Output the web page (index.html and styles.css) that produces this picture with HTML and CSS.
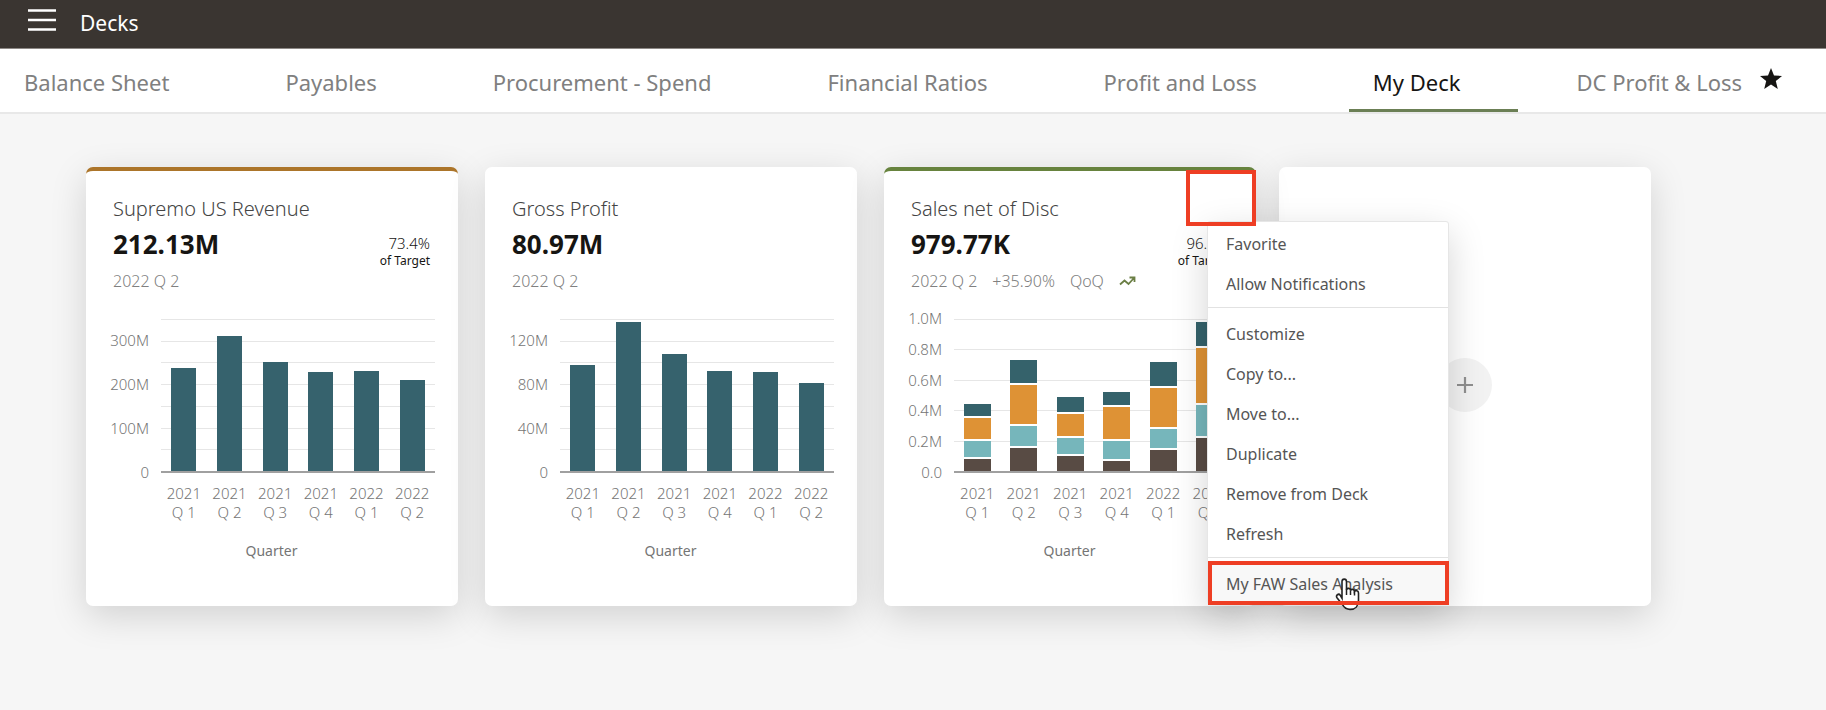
FILE: index.html
```
<!DOCTYPE html>
<html lang="en">
<head>
<meta charset="utf-8">
<title>Decks</title>
<link rel="stylesheet" href="styles.css">
</head>
<body>
<header class="topbar">
  <button class="menu-button" aria-label="Open navigation">
    <svg width="28" height="22" viewBox="0 0 28 22"><path d="M0 1.500h28M0 11h28M0 20.500h28" stroke="#fff" stroke-width="2.500"/></svg>
  </button>
  <h1 class="title">Decks</h1>
</header>

<nav class="tabs">
  <a class="tab" href="#">Balance Sheet</a>
  <a class="tab" href="#">Payables</a>
  <a class="tab" href="#">Procurement - Spend</a>
  <a class="tab" href="#">Financial Ratios</a>
  <a class="tab" href="#">Profit and Loss</a>
  <a class="tab tab-active" href="#" aria-current="page">My Deck</a>
  <a class="tab tab-starred" href="#">DC Profit &amp; Loss
    <svg class="star" width="22" height="21" viewBox="0 0 22 21"><path d="M11 0l3 7.400 8 .6-6.200 5.100 2 7.900L11 16.600 4.200 21l2-7.900L0 8l8-.6z" fill="#161513"/></svg>
  </a>
</nav>

<main class="deck">
  <section class="card kpi warn">
    <h2 class="card-title">Supremo US Revenue</h2>
    <div class="summary">
      <strong class="value">212.13M</strong>
      <p class="target"><span class="percent">73.4%</span><span>of Target</span></p>
    </div>
    <p class="period"><span>2022 Q 2</span></p>
    <div class="chart">
      <div class="scale sevenths"><span>300M</span><span>200M</span><span>100M</span><span>0</span></div>
      <div class="plot">
        <div class="lines"><i></i><i></i><i></i><i></i><i></i><i></i><i></i></div>
        <div class="bars">
          <div class="bar" style="height:68%"></div><div class="bar" style="height:89%"></div><div class="bar" style="height:72%"></div><div class="bar" style="height:65%"></div><div class="bar" style="height:66%"></div><div class="bar" style="height:60%"></div>
        </div>
      </div>
      <div class="quarters"><span>2021<br>Q 1</span><span>2021<br>Q 2</span><span>2021<br>Q 3</span><span>2021<br>Q 4</span><span>2022<br>Q 1</span><span>2022<br>Q 2</span></div>
      <p class="axis-title">Quarter</p>
    </div>
  </section>

  <section class="card kpi">
    <h2 class="card-title">Gross Profit</h2>
    <div class="summary">
      <strong class="value">80.97M</strong>
    </div>
    <p class="period"><span>2022 Q 2</span></p>
    <div class="chart">
      <div class="scale sevenths"><span>120M</span><span>80M</span><span>40M</span><span>0</span></div>
      <div class="plot">
        <div class="lines"><i></i><i></i><i></i><i></i><i></i><i></i><i></i></div>
        <div class="bars">
          <div class="bar" style="height:70%"></div><div class="bar" style="height:98%"></div><div class="bar" style="height:77%"></div><div class="bar" style="height:66%"></div><div class="bar" style="height:65%"></div><div class="bar" style="height:58%"></div>
        </div>
      </div>
      <div class="quarters"><span>2021<br>Q 1</span><span>2021<br>Q 2</span><span>2021<br>Q 3</span><span>2021<br>Q 4</span><span>2022<br>Q 1</span><span>2022<br>Q 2</span></div>
      <p class="axis-title">Quarter</p>
    </div>
  </section>

  <section class="card kpi good">
    <h2 class="card-title">Sales net of Disc</h2>
    <div class="summary">
      <strong class="value">979.77K</strong>
      <p class="target"><span class="percent">96.1%</span><span>of Target</span></p>
    </div>
    <p class="period"><span>2022 Q 2</span><span>+35.90%</span><span>QoQ</span>
      <svg class="trend" width="17" height="10" viewBox="0 0 17 10"><path d="M1 8.500l4.500-4 4 3.500L15 2M10.500 1.500h5v4.500" fill="none" stroke="#6b7f45" stroke-width="1.800"/></svg>
    </p>
    <div class="chart stacked">
      <div class="scale fifths"><span>1.0M</span><span>0.8M</span><span>0.6M</span><span>0.4M</span><span>0.2M</span><span>0.0</span></div>
      <div class="plot">
        <div class="lines"><i></i><i></i><i></i><i></i><i></i></div>
        <div class="bars">
          <div class="stack" style="height:44%"><b style="flex-grow:13"></b><b style="flex-grow:22"></b><b style="flex-grow:17"></b><b style="flex-grow:13"></b></div>
          <div class="stack" style="height:73%"><b style="flex-grow:24"></b><b style="flex-grow:40"></b><b style="flex-grow:20"></b><b style="flex-grow:24"></b></div>
          <div class="stack" style="height:49%"><b style="flex-grow:16"></b><b style="flex-grow:23"></b><b style="flex-grow:16"></b><b style="flex-grow:16"></b></div>
          <div class="stack" style="height:52%"><b style="flex-grow:14"></b><b style="flex-grow:33"></b><b style="flex-grow:19"></b><b style="flex-grow:11"></b></div>
          <div class="stack" style="height:72%"><b style="flex-grow:25"></b><b style="flex-grow:39"></b><b style="flex-grow:20"></b><b style="flex-grow:21"></b></div>
          <div class="stack" style="height:98%"><b style="flex-grow:24"></b><b style="flex-grow:56"></b><b style="flex-grow:32"></b><b style="flex-grow:33"></b></div>
        </div>
      </div>
      <div class="quarters"><span>2021<br>Q 1</span><span>2021<br>Q 2</span><span>2021<br>Q 3</span><span>2021<br>Q 4</span><span>2022<br>Q 1</span><span>2022<br>Q 2</span></div>
      <p class="axis-title">Quarter</p>
    </div>
    <div class="menu" role="menu">
      <button class="item" role="menuitem">Favorite</button>
      <button class="item" role="menuitem">Allow Notifications</button>
      <hr class="divider">
      <button class="item" role="menuitem">Customize</button>
      <button class="item" role="menuitem">Copy to...</button>
      <button class="item" role="menuitem">Move to...</button>
      <button class="item" role="menuitem">Duplicate</button>
      <button class="item" role="menuitem">Remove from Deck</button>
      <button class="item" role="menuitem">Refresh</button>
      <hr class="divider">
      <button class="item item-hover" role="menuitem">My FAW Sales Analysis</button>
      <svg class="pointer" width="25" height="34" viewBox="0 0 25 32" preserveAspectRatio="none"><path d="M7 20V4.500C7 1.200 11.500 1.200 11.500 4.500V12c.5-2 4-1.500 4 .5 .8-1.600 4-1 4 1 1-1.300 4-.8 4 1.500V22c0 5-3 8.500-8.500 8.500-4 0-6-2-7.500-4.500L2 19.500c-1.500-2.200 1.500-4.500 3.300-2.300z" fill="#fff" stroke="#222" stroke-width="1.600"/><path d="M11.500 11v6M15.500 12.500V17M19.500 13.500V17.500" stroke="#222" stroke-width="1.500"/></svg>
      <span class="mark mark-item"></span>
    </div>
    <span class="mark mark-corner"></span>
  </section>

  <section class="card add">
    <button class="add-button" aria-label="Add card">
      <svg width="18" height="18" viewBox="0 0 18 18"><path d="M9 1v16M1 9h16" stroke="#8f8f8f" stroke-width="2.200"/></svg>
    </button>
  </section>
</main>
</body>
</html>
```

FILE: styles.css
```
* { box-sizing: border-box; }
body {
  margin: 0;
  min-height: 100vh;
  background: #f6f6f6;
  color: #161513;
  font-family: "Noto Sans", "Open Sans", sans-serif;
}
h1, h2, p { margin: 0; font-weight: 400; }
button { border: 0; padding: 0; background: none; font: inherit; color: inherit; }

.topbar {
  display: flex;
  align-items: center;
  gap: 24px;
  height: 49px;
  padding: 0 28px 3px;
  background: #3a3531;
  border-bottom: 1px solid #8d8986;
  color: #fff;
}
.menu-button { height: 28px; }
.title { font-size: 21px; line-height: 28px; }

.tabs {
  display: flex;
  gap: 35px;
  height: 65px;
  background: #fff;
  border-bottom: 2px solid #e8e8e8;
}
.tab {
  display: flex;
  padding: 19px 57px 0 24px;
  border-bottom: 3px solid transparent;
  color: #808080;
  font-size: 22px;
  line-height: 28px;
  text-decoration: none;
  white-space: nowrap;
}
.tab-active { border-color: #6b7f55; color: #161513; }
.tab-starred { gap: 18px; padding-right: 0; }

.deck {
  display: flex;
  gap: 27px;
  padding: 53px 86px;
}
.card {
  position: relative;
  flex: 0 1 372px;
  min-height: 439px;
  border-radius: 7px;
  background: #fff;
  box-shadow: 0 10px 36px rgba(0, 0, 0, .15);
}
.kpi {
  padding: 24px 28px 0 27px;
  border-top: 4px solid #fff;
}
.warn { border-color: #ac752a; }
.good { border-color: #67833e; z-index: 1; }
.add { margin-left: -4px; }

.card-title { color: #444; font-size: 20px; font-weight: 300; line-height: 28px; }
.summary { display: flex; justify-content: space-between; height: 44px; }
.value { font-size: 26px; line-height: 42px; }
.target {
  display: flex;
  flex-direction: column;
  padding-top: 12px;
  font-size: 12px;
  line-height: 17px;
  text-align: right;
}
.percent { font-size: 15px; font-weight: 300; }
.period {
  display: flex;
  align-items: center;
  gap: 15px;
  padding-top: 2px;
  color: #808080;
  font-size: 16px;
  font-weight: 300;
  line-height: 24px;
  white-space: nowrap;
}

.chart {
  display: grid;
  grid-template-columns: 36px 1fr;
  column-gap: 12px;
  margin: 26px -5px 0 0;
  color: #757575;
  font-size: 15px;
  font-weight: 300;
}
.stacked { grid-template-columns: 31px 1fr; }
.scale {
  display: flex;
  flex-direction: column;
  justify-content: space-between;
  align-items: flex-end;
  height: 174px;
  margin: -11px 0 -9px;
  line-height: 20px;
}
.sevenths { height: 152px; margin-top: 11px; }
.plot { display: grid; height: 154px; border-bottom: 2px solid #a0a0a0; }
.lines, .bars { grid-area: 1 / 1; display: flex; min-height: 0; }
.lines { flex-direction: column; }
.lines i { flex: 1; border-top: 1px solid #e6e6e6; }
.bars { align-items: flex-end; justify-content: space-around; }
.bar { width: 25px; background: #36626d; }
.stack { display: flex; flex-direction: column; gap: 2px; width: 27px; background: #fff; }
.stack b:nth-child(1) { background: #35626b; }
.stack b:nth-child(2) { background: #de9235; }
.stack b:nth-child(3) { background: #76b6bb; }
.stack b:nth-child(4) { background: #584b44; }
.quarters {
  grid-column: 2;
  display: grid;
  grid-template-columns: repeat(6, 1fr);
  padding-top: 11px;
  line-height: 19px;
  text-align: center;
}
.axis-title {
  grid-column: 1 / -1;
  padding: 19px 5px 0 0;
  font-size: 14px;
  font-weight: 400;
  line-height: 20px;
  text-align: center;
}

.menu {
  position: absolute;
  top: 50px;
  left: 323px;
  width: 242px;
  padding: 2px 0 0;
  border: 1px solid #e6e6e6;
  border-radius: 3px;
  background: #fff;
  box-shadow: 0 12px 36px rgba(0, 0, 0, .17);
}
.item {
  display: block;
  width: 100%;
  height: 40px;
  padding: 0 18px;
  color: #555;
  font-size: 16px;
  text-align: left;
  white-space: nowrap;
}
.item-hover { background: #f8f8f8; }
.divider { margin: 3px 0 6px; border: 0; border-top: 1px solid #e2e2e2; }
.pointer { position: absolute; right: 88px; bottom: -7px; }
.mark { position: absolute; border: 4px solid #ee3e24; pointer-events: none; }
.mark-item { right: -1px; bottom: -1px; left: 0; height: 44px; }
.mark-corner { top: -1px; right: 0; width: 70px; height: 56px; }

.add-button {
  position: absolute;
  top: 191px;
  left: 159px;
  display: flex;
  align-items: center;
  justify-content: center;
  width: 54px;
  height: 54px;
  border-radius: 50%;
  background: #f2f2f2;
}
```
